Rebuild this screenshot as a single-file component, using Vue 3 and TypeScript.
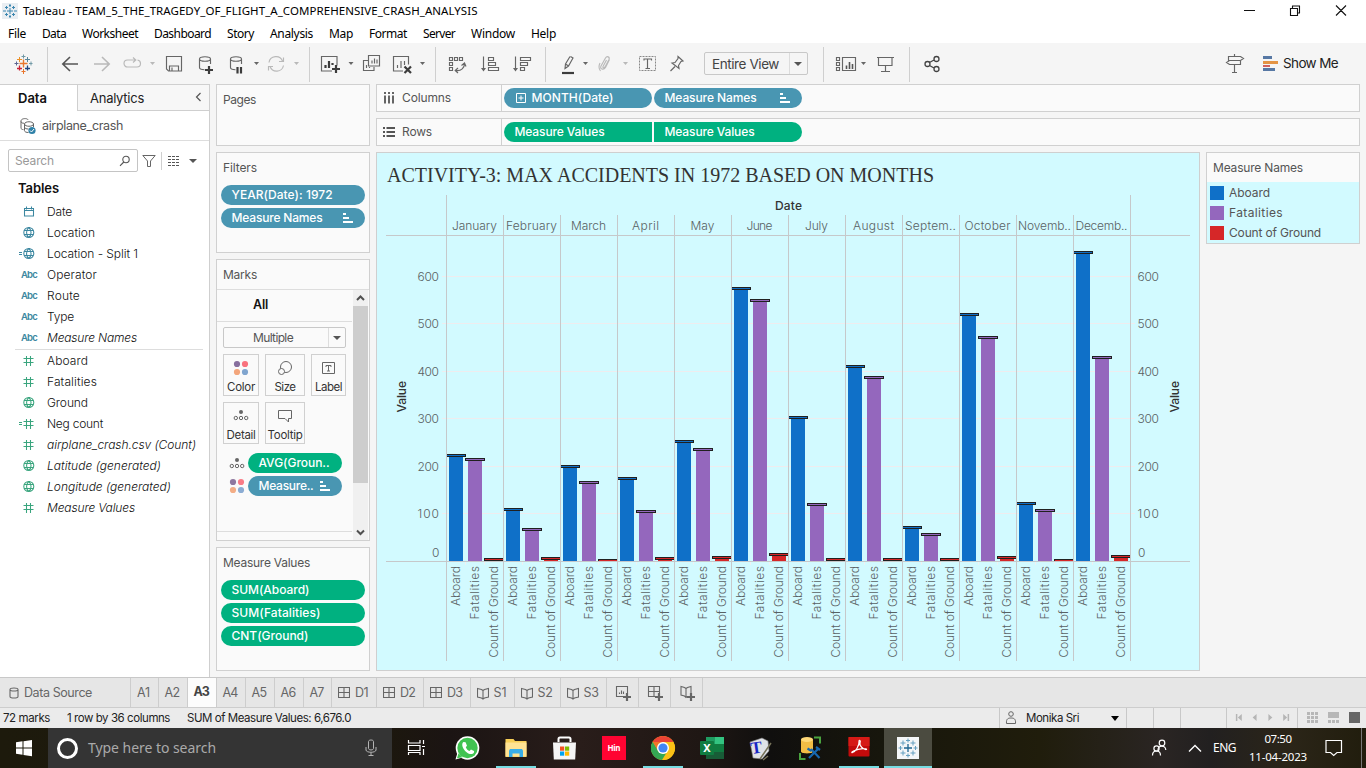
<script setup lang="ts">
interface Glyph {
  x: number
  w: number
  d?: string
  f?: string
  tone?: string
  bold?: string
}

// Tunes letter spacing so that a label takes the given width.
const vFit = {
  mounted(el: HTMLElement, binding: { value: number }) {
    const natural = el.getBoundingClientRect().width
    const count = (el.textContent ?? '').trim().length
    if (count > 0) el.style.letterSpacing = `${(binding.value - natural) / count}px`
  },
}

const menus: [string, number, number][] = [
  ['File', 18, 34], ['Data', 24, 40], ['Worksheet', 56, 72], ['Dashboard', 57, 73], ['Story', 27, 43],
  ['Analysis', 43, 59], ['Map', 24, 40], ['Format', 38, 54], ['Server', 32, 48], ['Window', 44, 60], ['Help', 25, 41],
]

const caret = (x: number) => `M${x - 2.5} 62h5l-2.5 3z`
const logo = 'M23.5 59.5v8M19.5 63.5h8'

const toolsLeft: Glyph[] = [
  { x: 47, w: 40, d: 'M78 64H63M70 57l-7.2 7 7.200 7', tone: 'strong' },
  { x: 87, w: 30, d: 'M94 64h15M102 57l7.200 7-7.200 7', tone: 'light strong' },
  { x: 117, w: 43, d: 'M133 67h-5.500a3.500 3.500 0 0 1-3.500-3.500 3.500 3.500 0 0 1 3.500-3.500h8M133 57.500l2.800 2.500-2.800 2.500M137.500 60a3.500 3.500 0 0 1 3 3.500c0 2-1.500 3.500-3.500 3.500h-4', f: caret(152.5), tone: 'light' },
  { x: 160, w: 30, d: 'M166.500 56.500h15v14.500h-13l-2-2zM169.500 71v-5h9v5M172 71v-3.500' },
  { x: 190, w: 32, d: 'M199.500 59c0-3 11-3 11 0s-11 3-11 0v8.500c0 1.500 2.500 2.200 5 2.300M210.500 59v5', bold: 'M209 66v8M205 70h8' },
  { x: 222, w: 42, d: 'M230.500 59c0-3 11-3 11 0s-11 3-11 0v8.500c0 1.500 2.500 2.200 5 2.300M241.500 59v5', f: caret(256.5), bold: 'M237.500 67v6.500M241 67v6.500' },
  { x: 264, w: 45, d: 'M269 62.500c1-7 11-8 13.500-1.500M283.500 65.500c-1.500 7-11 7.500-13.500 1M283.500 57.500v4h-4.500M268.500 70.500v-4h4.500', f: caret(296.5), tone: 'light' },
]
const toolsSheet: Glyph[] = [
  { x: 311, w: 47, d: 'M332 71h-10.500v-14.500h15.500v9', f: caret(351), bold: 'M336 65v8M332 69h8M325.500 68v-3M329 68v-7M332.500 65v-2' },
  { x: 358, w: 28, d: 'M368.500 55.500h11v10.500h-11zM368 60.500h-4.500v10h10.500v-3.500M366.500 68v-3M369.500 68v-1M372 63.500v-3M374.500 63.500v-5M377 63.500v-4' },
  { x: 386, w: 49, d: 'M403 71h-9.500v-14.500h15v8M397.500 68v-3M401 68v-7M404.500 65v-4', f: caret(422.5), bold: 'M404.500 66.500l6.500 6.500M411 66.500l-6.500 6.500' },
]
const toolsOrder: Glyph[] = [
  { x: 437, w: 37, d: 'M449.500 57.500h3v3h-3zM454.500 57.500h3v3h-3zM459.500 57.500h3v3h-3zM449.500 62.500h3v3h-3zM449.500 67.500h3v3h-3zM455.500 70.500c6 1 9-3 9-7M461.500 65.500l3-2.500 1.500 3.500M458 68l-2.800 2.500 2.800 2.500' },
  { x: 474, w: 32, d: 'M483.500 56.500v13M488.500 57.500h5v3h-5zM488.500 62.500h7v3h-7zM488.500 67.500h10v3h-10z', f: 'M481 68h5l-2.500 3.500z' },
  { x: 506, w: 39, d: 'M515.500 56.500v13M520.500 57.500h10v3h-10zM520.500 62.500h7v3h-7zM520.500 67.500h4v3h-4z', f: 'M513 68h5l-2.500 3.500z' },
]
const toolsMark: Glyph[] = [
  { x: 547, w: 45, d: 'M570.500 56.500l2.500 1.500-4.500 8-3.500 2.500.500-4.500 4.500-7.500M565.500 64l3 2', f: caret(585.5), bold: 'M562 73h12' },
  { x: 592, w: 41, d: 'M609.500 59.500l-4 8c-2 3-6 1.500-4.500-1.500l4.500-8c1.500-2.500 4.500-1 3.500 1.500l-4 7.500c-1.500 1.500-2.500.500-2-.500l3.500-6.500M600 63c-1.500 3-1 6 .500 8', f: caret(625.5), tone: 'light' },
  { x: 633, w: 29, d: 'M644 60.500v-1.500h7.500v1.500M647.500 59v9M645.500 68.500h4.500' },
  { x: 662, w: 34, d: 'M678 56.500l5 4.500-2 .500-2.500 4 .500 3-7-5.500 3-.500 3-4zM675 66.500l-4.500 4.500' },
]
const toolsView: Glyph[] = [
  { x: 825, w: 43, d: 'M842.500 57.500h13v13h-13zM836.500 57.500h3v3h-3zM836.500 62.500h3v3h-3zM836.500 67.500h3v3h-3z', f: caret(863.5), bold: 'M846.500 69v-3.500M849.500 69v-7M852.500 69v-5' },
  { x: 868, w: 41, d: 'M877 57.500h17M878.500 57.500v8h13.500v-8M885.500 66v5M881 71.500h9' },
]
const toolShare: Glyph = { x: 911, w: 40, d: 'M930 64a2.500 2.500 0 1 1-5 0a2.500 2.500 0 1 1 5 0M939 59a2.500 2.500 0 1 1-5 0a2.500 2.500 0 1 1 5 0M939 69a2.500 2.500 0 1 1-5 0a2.500 2.500 0 1 1 5 0M929.500 62.500l4.500-2.500M929.500 65.500l4.500 2.500' }

type FieldIcon = 'date' | 'globe' | 'abc' | 'num'
interface Field { name: string; w: number; icon: FieldIcon; calc?: boolean; it?: boolean }
const dimensions: Field[] = [
  { name: 'Date', w: 25, icon: 'date' },
  { name: 'Location', w: 48, icon: 'globe' },
  { name: 'Location - Split 1', w: 91, icon: 'globe', calc: true },
  { name: 'Operator', w: 50, icon: 'abc' },
  { name: 'Route', w: 33, icon: 'abc' },
  { name: 'Type', w: 27, icon: 'abc' },
  { name: 'Measure Names', w: 90, icon: 'abc', it: true },
]
const measures: Field[] = [
  { name: 'Aboard', w: 41, icon: 'num' },
  { name: 'Fatalities', w: 50, icon: 'num' },
  { name: 'Ground', w: 41, icon: 'globe' },
  { name: 'Neg count', w: 56, icon: 'num', calc: true },
  { name: 'airplane_crash.csv (Count)', w: 149, icon: 'num', it: true },
  { name: 'Latitude (generated)', w: 114, icon: 'globe', it: true },
  { name: 'Longitude (generated)', w: 124, icon: 'globe', it: true },
  { name: 'Measure Values', w: 88, icon: 'num', it: true },
]
const fieldGroups = [
  { kind: 'dim', rows: dimensions },
  { kind: 'mea', rows: measures },
]

// Per month: label, label width, and the top of each bar's cap (aboard, fatalities, ground).
const months: [string, number, number, number, number][] = [
  ['January', 45, 454, 458, 558], ['February', 51, 508, 528, 557], ['March', 35, 465, 481, 559],
  ['April', 27, 477, 510, 557], ['May', 24, 440, 448, 556], ['June', 26, 287, 299, 553],
  ['July', 23, 416, 503, 558], ['August', 41, 365, 376, 558], ['Septem..', 51, 526, 533, 558],
  ['October', 46, 313, 336, 556], ['Novemb..', 53, 502, 509, 559], ['Decemb..', 52, 251, 356, 555],
]
const series = [
  { name: 'Aboard', color: '#0f70c8', bar: 3, cap: 1, capW: 19, base: 14, len: 40, lw: 41 },
  { name: 'Fatalities', color: '#9467bd', bar: 22, cap: 19, capW: 20, base: 33, len: 53.5, lw: 54 },
  { name: 'Count of Ground', color: '#d62728', bar: 41, cap: 38, capW: 19, base: 52, len: 91.5, lw: 92 },
]
const colX = (i: number) => 446 + i * 57
const ticks: [string, number][] = [
  ['600', 276], ['500', 323], ['400', 371], ['300', 418], ['200', 466], ['100', 513],
]

interface SheetTab { t: string; w: number; tw: number; kind?: 'dash' | 'story' }
const sheets: SheetTab[] = [
  { t: 'A1', w: 28, tw: 13 }, { t: 'A2', w: 29, tw: 15 }, { t: 'A3', w: 29, tw: 15 }, { t: 'A4', w: 29, tw: 15 },
  { t: 'A5', w: 29, tw: 15 }, { t: 'A6', w: 29, tw: 15 }, { t: 'A7', w: 28, tw: 14 },
  { t: 'D1', w: 45, tw: 13, kind: 'dash' }, { t: 'D2', w: 47, tw: 15, kind: 'dash' }, { t: 'D3', w: 47, tw: 15, kind: 'dash' },
  { t: 'S1', w: 44, tw: 13, kind: 'story' }, { t: 'S2', w: 46, tw: 15, kind: 'story' }, { t: 'S3', w: 46, tw: 15, kind: 'story' },
]
const active = 'A3'
const book = 'M.500 2.500l4 1 1.500 1 1.500-1 4-1v8.500l-4 1-1.500 1-1.500-1-4-1zM6 4.500v8'
const cards = [['Color', 36, 28], ['Size', 40, 21], ['Label', 35, 27], ['Detail', 36, 29], ['Tooltip', 40, 35]] as const
</script>

<template>
  <div class="app">
    <header class="title">
      <svg class="app-icon" viewBox="0 0 16 16"><rect width="16" height="16" fill="#e9eef2" /><path d="M8 5v6M5 8h6M8 1v3M8 12v3M1 8h3M12 8h3M4.500 3v3M3 4.500h3M11.500 3v3M10 4.500h3M4.500 10v3M3 11.500h3M11.500 10v3M10 11.500h3M7 2.500h2M7 13.500h2" stroke="#3c87b0" fill="none" /></svg>
      <span v-fit="454.500">Tableau - TEAM_5_THE_TRAGEDY_OF_FLIGHT_A_COMPREHENSIVE_CRASH_ANALYSIS</span>
      <svg class="win" viewBox="1240 0 120 22"><path d="M1244 10.500h11M1290.500 8.500h7v7h-7zM1292.500 8v-2h7v7h-2M1336 5.500l10 10M1346 5.500l-10 10" stroke="#111" fill="none" stroke-width="1.100" /></svg>
    </header>
    <nav class="menu">
      <span v-for="m in menus" :key="m[0]" class="menu-item" :style="{ width: m[2] + 'px' }"><span v-fit="m[1]">{{ m[0] }}</span></span>
    </nav>

    <div class="toolbar">
      <svg class="tool logo-tool" viewBox="0 43 47 41">
        <path :d="logo" stroke="#e8762d" stroke-width="1.400" />
        <path d="M19.500 57v5M17 59.500h5" stroke="#eb9129" /><path d="M27.500 57v5M25 59.500h5" stroke="#59879b" />
        <path d="M19.500 65.500v5M17 68.500h5" stroke="#c72035" stroke-width="1.300" /><path d="M27.500 65.500v5M25 68.500h5" stroke="#1f447e" stroke-width="1.300" />
        <path d="M23.500 54.500v4M21.500 56.500h4M31 61.500v4M29 63.500h3.500" stroke="#7199a6" /><path d="M16.500 61.500v4M14.500 63.500h4" stroke="#5b6591" /><path d="M23.500 69v5M21.500 71.500h4" stroke="#e8762d" />
      </svg>
      <template v-for="(group, gi) in [toolsLeft, toolsSheet, toolsOrder, toolsMark]" :key="gi">
        <i v-if="gi" class="sep" /><i v-else class="sep first" />
        <svg v-for="g in group" :key="g.x" class="tool" :class="g.tone" :viewBox="`${g.x} 43 ${g.w} 41`" :style="{ width: g.w + 'px' }">
          <path v-if="g.x === 633" d="M639.500 56.500h16v14h-16z" class="dash" />
          <path v-if="g.d" :d="g.d" class="line" /><path v-if="g.bold" :d="g.bold" class="heavy" /><path v-if="g.f" :d="g.f" class="fill" />
        </svg>
      </template>
      <div class="view-select"><span v-fit="67">Entire View</span><i class="drop" /></div>
      <i class="sep" />
      <svg v-for="g in toolsView" :key="g.x" class="tool" :viewBox="`${g.x} 43 ${g.w} 41`" :style="{ width: g.w + 'px' }">
        <path :d="g.d" class="line" /><path v-if="g.bold" :d="g.bold" class="heavy thin" /><path v-if="g.f" :d="g.f" class="fill" />
      </svg>
      <i class="sep" />
      <svg class="tool share" viewBox="911 43 40 41"><path :d="toolShare.d" class="line" /></svg>
      <svg class="tool guide" viewBox="1220 43 30 41"><path d="M1234.500 54v2M1234.500 64.500v8M1228.500 56.500h12l3 2-3 2h-12zM1240.500 60.500h-11l-3 2 3 2h11zM1232 72.500h5" class="line" /></svg>
      <svg class="tool show-icon" viewBox="1262 43 16 41"><path d="M1263 57.500h9" stroke="#5778a4" stroke-width="3" /><path d="M1263 62.500h15" stroke="#e49444" stroke-width="3" /><path d="M1263 66h7" stroke="#d1615d" stroke-width="2" /><path d="M1263 69.500h12" stroke="#5778a4" stroke-width="3" /></svg>
      <span class="show-me"><span v-fit="55">Show Me</span></span>
    </div>

    <main class="work">
      <aside class="data-pane">
        <div class="pane-tabs"><div class="tab on"><span v-fit="29">Data</span></div><div class="tab"><span v-fit="54">Analytics</span><svg viewBox="0 0 7 10"><path d="M5.500 1l-4 4 4 4" stroke="#555" fill="none" stroke-width="1.200" /></svg></div></div>
        <div class="source">
          <svg viewBox="0 0 18 18"><path d="M2 4c0-3 7-3 7-1M2 4v7c0 1 1 1.500 2.500 1.700M2 4.500c0 1.500 2 1.800 3 1.700M5.500 7c0-3 9-3 9 0s-9 3-9 0v6.500c0 1.500 2 2 4 2M14.500 7v3M5.500 10c0 1.500 2 2 4 2" stroke="#666" fill="none" /><circle cx="13" cy="13.500" r="3.600" fill="#2f81a8" /><path d="M11 13.500l1.500 1.500 2.500-3" stroke="#fff" fill="none" /></svg>
          <span v-fit="81">airplane_crash</span>
        </div>
        <div class="search-row">
          <div class="search"><span v-fit="39">Search</span><svg viewBox="0 0 12 12"><circle cx="7" cy="4.500" r="3.200" /><path d="M4.800 7L1 10.800" /></svg></div>
          <svg class="funnel" viewBox="0 0 14 14"><path d="M.8 1.500h12.400L8.500 7v5.500h-3V7z" /></svg>
          <i class="bar" />
          <svg class="rows" viewBox="0 0 12 10"><path d="M0 .5h12M0 3.500h12M0 6.500h12M0 9.500h12" stroke-dasharray="3 1" /></svg>
          <i class="drop" />
        </div>
        <h3><span v-fit="41">Tables</span></h3>
        <ul v-for="grp in fieldGroups" :key="grp.kind" class="fields" :class="grp.kind">
          <li v-for="f in grp.rows" :key="f.name">
            <span v-if="f.icon === 'abc'" class="abc"><span v-fit="16">Abc</span></span>
            <svg v-else class="ficon" viewBox="0 0 17 13">
              <path v-if="f.calc" d="M0 5.500h3M0 7.500h3" />
              <path v-if="f.icon === 'date'" d="M5.500 3.500h9v7.500h-9zM5.500 5.500h9M7.500 1.500v3M12.500 1.500v3" />
              <path v-else-if="f.icon === 'globe'" d="M14.800 6.500a5 5 0 1 1-10 0a5 5 0 1 1 10 0M9.800 1.500c-3 2.500-3 7.500 0 10M9.800 1.500c3 2.500 3 7.500 0 10M5.500 4.500h8.500M5.500 8.500h8.500" />
              <path v-else d="M7.500 2v10M11.500 2v10M4.500 4.500h10M4.500 8.500h10" />
            </svg>
            <span class="fname" :class="{ it: f.it }"><span v-fit="f.w">{{ f.name }}</span></span>
          </li>
        </ul>
      </aside>

      <section class="cards">
        <div class="card pages"><h4><span v-fit="33">Pages</span></h4></div>
        <div class="card filters"><h4><span v-fit="34">Filters</span></h4>
          <div class="pill blue"><span v-fit="101">YEAR(Date): 1972</span></div>
          <div class="pill blue"><span v-fit="91">Measure Names</span><svg class="sort" viewBox="0 0 10 10"><path d="M0 1h3M0 5h6M0 9h10" /></svg></div>
        </div>
        <div class="card marks"><h4><span v-fit="34">Marks</span></h4>
          <div class="marks-body">
            <div class="marks-main">
              <div class="all"><span v-fit="15">All</span></div>
              <div class="multi"><span class="mlabel"><span v-fit="40">Multiple</span></span><span class="mdrop"><i class="drop" /></span></div>
              <div class="mark-cards">
                <div v-for="(c, ci) in cards" :key="c[0]" class="mc" :style="{ width: c[1] + 'px' }">
                  <svg viewBox="0 0 16 16">
                    <g v-if="ci === 0"><circle cx="4" cy="4" r="3.100" fill="#876f9e" /><circle cx="12" cy="4" r="3.100" fill="#f9727e" /><circle cx="4" cy="12" r="3.100" fill="#f3a67c" /><circle cx="12" cy="12" r="3.100" fill="#80a5cf" /></g>
                    <g v-else-if="ci === 1" class="ol"><circle cx="9" cy="7" r="5.500" /><circle cx="4.500" cy="11.500" r="3" fill="#fafafa" /></g>
                    <g v-else-if="ci === 2" class="ol"><path d="M1.500 2.500h12v11h-12zM5 7V5.500h5V7M7.500 5.500V11M6 11h3" /></g>
                    <g v-else-if="ci === 3" class="ol"><circle cx="8" cy="4" r="2" fill="#666" stroke="none" /><circle cx="2.800" cy="10" r="1.700" /><circle cx="8" cy="10" r="1.700" /><circle cx="13.200" cy="10" r="1.700" /></g>
                    <g v-else class="ol"><path d="M1.500 2.500h13v8h-3v3.500l-3.500-3.500h-6.500z" /></g>
                  </svg>
                  <span v-fit="c[2]">{{ c[0] }}</span>
                </div>
              </div>
              <div class="enc"><svg viewBox="0 0 16 16" class="ol"><circle cx="8" cy="5" r="2" fill="#666" stroke="none" /><circle cx="2.800" cy="11" r="1.700" /><circle cx="8" cy="11" r="1.700" /><circle cx="13.200" cy="11" r="1.700" /></svg><div class="pill green"><span v-fit="71">AVG(Groun..</span></div></div>
              <div class="enc"><svg viewBox="0 0 16 16"><circle cx="4" cy="4" r="3.100" fill="#8f789f" /><circle cx="12" cy="4" r="3.100" fill="#f97c87" /><circle cx="4" cy="12" r="3.100" fill="#f3ad86" /><circle cx="12" cy="12" r="3.100" fill="#8bacd3" /></svg><div class="pill blue"><span v-fit="55">Measure..</span><svg class="sort" viewBox="0 0 10 10"><path d="M0 1h3M0 5h6M0 9h10" /></svg></div></div>
            </div>
            <div class="scroll"><svg viewBox="0 0 15 16"><path d="M4 10l3.500-3.500L11 10" /></svg><i /><svg class="down" viewBox="0 0 15 16"><path d="M4 6.500l3.500 3.500L11 6.500" /></svg></div>
          </div>
        </div>
        <div class="card values"><h4><span v-fit="87">Measure Values</span></h4>
          <div class="pill green"><span v-fit="78">SUM(Aboard)</span></div>
          <div class="pill green"><span v-fit="89">SUM(Fatalities)</span></div>
          <div class="pill green"><span v-fit="77">CNT(Ground)</span></div>
        </div>
      </section>

      <section class="stage">
        <div class="shelf"><div class="shelf-name"><svg viewBox="0 0 12 12"><path d="M2 0v2M6 0v2M10 0v2M2 3.500v8M6 3.500v8M10 3.500v8" /></svg><span v-fit="49">Columns</span></div>
          <div class="pill blue"><svg class="plus" viewBox="0 0 10 10"><path d="M.5.5h9v9h-9zM2.500 5h5M5 2.500v5" /></svg><span v-fit="82">MONTH(Date)</span></div>
          <div class="pill blue"><span v-fit="92">Measure Names</span><svg class="sort" viewBox="0 0 10 10"><path d="M0 1h3M0 5h6M0 9h10" /></svg></div>
        </div>
        <div class="shelf"><div class="shelf-name"><svg viewBox="0 0 12 12"><path d="M0 2h2M0 6h2M0 10h2M3.500 2h8.500M3.500 6h8.500M3.500 10h8.500" /></svg><span v-fit="30">Rows</span></div>
          <div class="pill green lhalf"><span v-fit="90">Measure Values</span></div>
          <div class="pill green rhalf"><span v-fit="90">Measure Values</span></div>
        </div>
        <div class="viz-row">
          <svg class="viz" viewBox="376 152 824 519" shape-rendering="crispEdges">
            <rect x="376.500" y="152.500" width="823" height="518" fill="#d2faff" stroke="#cfcfcf" />
            <text x="387" y="181.500" class="vt" textLength="547">ACTIVITY-3: MAX ACCIDENTS IN 1972 BASED ON MONTHS</text>
            <text x="775" y="210" class="dk" textLength="27">Date</text>
            <g v-for="t in ticks" :key="t[0]">
              <path :d="`M442 ${t[1] + .5}H1135`" stroke="#efecee" />
              <text x="417.500" :y="t[1] + 5" class="ax" textLength="21.500">{{ t[0] }}</text>
              <text x="1137.500" :y="t[1] + 5" class="ax" textLength="21.500">{{ t[0] }}</text>
            </g>
            <text x="432" y="557" class="ax">0</text><text x="1138" y="557" class="ax">0</text>
            <g v-for="(m, i) in months" :key="m[0]">
              <text :x="colX(i) + 28.500 - m[1] / 2" y="230" class="ax" :textLength="m[1]">{{ m[0] }}</text>
              <path :d="`M${colX(i) + 19.5} 562v3M${colX(i) + 38.5} 562v3`" stroke="#eef2f2" />
              <g v-for="(s, k) in series" :key="s.name">
                <rect :x="colX(i) + s.bar" :y="(m[k + 2] as number) + 1" width="14" :height="560 - (m[k + 2] as number)" :fill="s.color" />
                <rect :x="colX(i) + s.cap" :y="m[k + 2]" :width="s.capW" :height="m[k + 2] === 559 ? 2 : 3" fill="#202020" />
                <rect :x="colX(i) + s.cap + (k ? 1 : 0)" :y="(m[k + 2] as number) + 1" :width="s.capW - (k === 1 ? 2 : 1)" height="1" :fill="s.color" />
                <text :transform="`translate(${colX(i) + s.base} ${566 + s.len}) rotate(-90)`" class="ax" :textLength="s.len">{{ s.name }}</text>
              </g>
            </g>
            <path v-for="n in 13" :key="n" :d="`M${colX(n - 1) + .5} ${n === 1 || n === 13 ? 195 : 215}V661`" stroke="#c6c8ca" />
            <path d="M386 235.500H1190M386 561.500H1190" stroke="#c6c8ca" />
            <text transform="translate(406 412.500) rotate(-90)" class="dk" textLength="31.500">Value</text>
            <text transform="translate(1179 412.500) rotate(-90)" class="dk" textLength="31.500">Value</text>
          </svg>
          <div class="legend"><h4><span v-fit="90">Measure Names</span></h4>
            <div v-for="s in series" :key="s.name" class="lrow"><i :style="{ background: s.color }" /><span v-fit="s.lw">{{ s.name }}</span></div>
          </div>
        </div>
      </section>
    </main>

    <footer class="sheets">
      <div class="ds"><svg viewBox="0 0 10 12"><path d="M1 2.500c0-2 8-2 8 0s-8 2-8 0v7c0 2 8 2 8 0v-7" /></svg><span v-fit="68">Data Source</span></div>
      <div v-for="s in sheets" :key="s.t" class="sheet" :class="{ on: s.t === active }" :style="{ width: s.w + 'px' }">
        <svg v-if="s.kind === 'dash'" viewBox="0 0 12 14"><path d="M.5 1.500h11v10h-11zM6 1.500v10M.5 6.500h11" /></svg>
        <svg v-else-if="s.kind === 'story'" viewBox="0 0 12 14"><path :d="book" /></svg>
        <span v-fit="s.tw">{{ s.t }}</span>
      </div>
      <div class="new"><svg viewBox="0 0 16 16"><path d="M9 11.500H1.500v-10h11V8M4.500 9V7.500M6.500 9V5.500M8.500 9V6.500" /><path class="h" d="M12 8v8M8 12h8" /></svg></div>
      <div class="new"><svg viewBox="0 0 16 16"><path d="M9 11.500H1.500v-10h11V8M7 1.500v10M1.500 6.500h11" /><path class="h" d="M12 8v8M8 12h8" /></svg></div>
      <div class="new"><svg viewBox="0 0 16 16"><path d="M8 11.500l-1 1-1.500-1.500-3.500-1v-8.500l3.500 1L7 3.500l1.500-1 3.500-1V8M7 3.500v9" /><path class="h" d="M12 8v8M8 12h8" /></svg></div>
    </footer>

    <div class="status">
      <span class="s1"><span v-fit="47">72 marks</span></span><span class="s2"><span v-fit="103">1 row by 36 columns</span></span><span><span v-fit="164">SUM of Measure Values: 6,676.0</span></span>
      <div class="user"><svg viewBox="0 0 12 14"><circle cx="6" cy="3" r="2.300" /><path d="M1.500 12.500c-.5-5 2-5.500 4.500-5.500s5 .5 4.500 5.500z" /></svg><span v-fit="53">Monika Sri</span><i class="drop blk" /></div>
      <i class="cell" /><i class="cell" /><i class="cell c3" />
      <svg class="nav" viewBox="1227 708 71 20"><path d="M1236 714h1.500v7h-1.500zM1242 714v7l-4-3.500zM1257 714v7l-4-3.500zM1269 714v7l4-3.500zM1284 714v7l4-3.500zM1288.500 714h1.500v7h-1.500z" fill="#b5b5b5" /></svg>
      <svg class="modes" viewBox="1298 708 68 20"><path d="M1307 712h3v3h-3zM1311 712h3v3h-3zM1315 712h3v3h-3zM1307 716h3v3h-3zM1311 716h3v3h-3zM1315 716h3v3h-3zM1307 720h3v3h-3zM1311 720h3v3h-3zM1315 720h3v3h-3zM1328 712h11v6h-11zM1328 720h3v3h-3zM1332 720h3v3h-3zM1336 720h3v3h-3z" fill="#b7b7b7" /><path d="M1349 712h11v11h-11z" fill="#666" /></svg>
    </div>

    <div class="taskbar">
      <svg class="start" viewBox="0 0 48 40"><path d="M16 14.300l6.500-1v6.200H16zM23.500 13.200l8.500-1.300v7.600h-8.500zM16 20.500h6.500v6.300l-6.500-1zM23.500 20.500H32v7.800l-8.500-1.300z" fill="#fff" /></svg>
      <div class="tsearch"><i class="cortana" /><span v-fit="128">Type here to search</span>
        <svg viewBox="0 0 12 18"><path d="M3.500 2.500c0-2 5-2 5 0v7c0 2-5 2-5 0zM1 8v3c0 3 10 3 10 0V8M6 13.500v3M3.500 16.500h5" /></svg></div>
      <svg class="tv" viewBox="392 728 50 40"><path d="M408.500 740v3h11.500V740M408.500 755v-2.500h11.500v2.500M408.500 745.500h11.500v5h-11.500zM423.500 740v4M423.500 749v6M422 746.500h3" stroke="#fff" fill="none" stroke-width="1.200" /></svg>
      <svg class="apps" viewBox="442 728 490 40">
        <rect x="884" y="728" width="48" height="40" fill="#4b4b40" />
        <path d="M496 766h40v2h-40zM643 766h40v2h-40zM839 766h40v2h-40zM884 766h48v2h-48z" fill="#76dce2" />
        <circle cx="467.500" cy="748" r="11.800" fill="#fff" /><path d="M455.500 759.500l2-7 5 5z" fill="#fff" /><circle cx="467.500" cy="748" r="10.200" fill="#40c351" /><path d="M457 758.200l1.500-5 4 4z" fill="#40c351" />
        <path d="M463.500 742c-4 3 2.500 13 8.500 12 2-.5 2.300-2 2-3l-3-1.500-1.500 1.500c-1.500-.5-3-2-3.700-3.800l1.200-1.400-1.400-3.500z" fill="#fff" />
        <path d="M505.500 739h8l1.500 2h11.500v16h-21z" fill="#f8cf57" /><path d="M505.500 742.500h21v14h-21z" fill="#ffe394" /><path d="M509 757v-5.500c0-2 1-2.500 2-2.500h10c1 0 2 .5 2 2.500v5.500h-3.500v-3.500h-7v3.500z" fill="#38aee8" />
        <path d="M558.500 742v-3c0-1 .5-1.500 1.500-1.500h9c1 0 1.500.5 1.500 1.500v3" fill="none" stroke="#fff" stroke-width="2" /><path d="M553 742.500h23l-.8 17h-21.400z" fill="#f5f5f5" /><path d="M560 746.500h4.200v4.200H560z" fill="#f25022" /><path d="M565 746.500h4.200v4.200H565z" fill="#7fba00" /><path d="M560 751.500h4.200v4.200H560z" fill="#00a4ef" /><path d="M565 751.500h4.200v4.200H565z" fill="#ffb900" />
        <rect x="602" y="736" width="24" height="24" fill="#ff0432" /><text x="607.500" y="751.200" class="hin" textLength="13">Hin</text>
        <circle cx="663" cy="748" r="12" fill="#fbc116" /><path d="M652.600 742A12 12 0 0 1 673.400 742L663 742z" fill="#ea4335" /><path d="M652.600 742L658 751l5 3-4.500 5.200A12 12 0 0 1 652.600 742z" fill="#34a853" /><path d="M652.600 742h10.400l-5 9z" fill="#ea4335" opacity=".6" /><path d="M673.400 742H663l5.200 9-6.200 9A12 12 0 0 0 673.400 742z" fill="#fbc116" /><path d="M652.600 742l5.200 9a6 6 0 0 0 8.500 2l-4.300 7a12 12 0 0 1-9.400-18z" fill="#34a853" /><circle cx="663" cy="748" r="6" fill="#fff" /><circle cx="663" cy="748" r="4.600" fill="#4285f4" />
        <path d="M706 737h18v22h-18z" fill="#21a366" /><path d="M706 737h9v7h-9z" fill="#1f9c61" /><path d="M715 737h9v7h-9z" fill="#33c481" /><path d="M706 744h18v8h-18z" fill="#107c41" /><path d="M706 752h18v7h-18z" fill="#185c37" /><rect x="700" y="741" width="14" height="14" rx="1" fill="#107c41" /><text x="703.300" y="752.200" class="xl">X</text>
        <path d="M750 742l12-4 6 3 1 10-7 8-9-1z" fill="#dfe2e6" stroke="#777" stroke-width=".6" /><path d="M760 759l11-16M763 760l5-4" stroke="#77735a" fill="none" stroke-width="1.500" /><text transform="translate(751.500 754) rotate(-8)" class="tt">T</text>
        <path d="M801 739.500v12c0 2.500 12 2.500 12 0v-12" fill="#f2bd45" /><ellipse cx="807" cy="739.500" rx="6" ry="2.500" fill="#ffd978" /><path d="M814 737.500h6v6M800 753v6h5.500" fill="none" stroke="#4aa33f" stroke-width="2" /><path d="M809 758l9-9M811 749l8.500 9M807.500 748.500l4 2.500M816 747l4 3" stroke="#1768b0" stroke-width="2.200" fill="none" />
        <rect x="848.500" y="737" width="21" height="19.500" rx="1" fill="#c20b0b" /><path d="M848.500 737h21v9h-21z" fill="#d61a16" /><path d="M852.500 752.500c3-.5 7-7 6.500-11 0-2 2-1 1 1.500-1 3 4 7 6.500 6.500 1-1-6-2-13 1.500-2 1-2 2-1 1.500z" fill="none" stroke="#fff" stroke-width="1.200" />
        <rect x="897" y="737" width="22" height="22" fill="#f4f6f8" /><path d="M908 744v8M904 748h8" stroke="#1f6590" stroke-width="1.300" /><path d="M908 738.500v4M906 740.500h4M908 753.500v4M906 755.500h4M898.500 748h4M900.500 746v4M913.500 748h4M915.500 746v4M903 740.500v5M900.500 743h5M913 740.500v5M910.500 743h5M903 750.500v5M900.500 753h5M913 750.500v5M910.500 753h5" stroke="#659fc0" />
      </svg>
      <svg class="tray" viewBox="1145 728 62 40"><g stroke="#fff" fill="none" stroke-width="1.200"><circle cx="1162" cy="743" r="2.800" /><path d="M1158 750c0-5 7.500-5 7.800 0" /><circle cx="1156.500" cy="748.500" r="2.600" /><path d="M1152.500 755.500c0-6 8-6 8 0" /><path d="M1189 751.500l6-6 6 6" stroke-width="1.400" /></g></svg>
      <span class="eng"><span v-fit="23">ENG</span></span>
      <div class="clock"><span v-fit="27">07:50</span><span v-fit="58">11-04-2023</span></div>
      <svg class="note" viewBox="0 0 18 18"><path d="M1 1.500h15.500v12h-4.500l-3.300 3-3.200-3H1z" /></svg>
      <i class="peek" />
    </div>
  </div>
</template>

<style>
html, body { margin: 0; overflow: hidden; }
</style>

<style scoped>
* { box-sizing: border-box; }
.app { width: 1366px; height: 768px; display: flex; flex-direction: column; background: #f5f5f5; font: 12px/16px Inter, "Liberation Sans", sans-serif; color: #333; white-space: nowrap; overflow: hidden; }
span { display: inline-block; }
svg { display: block; flex: none; }
i { flex: none; display: block; }
h3, h4 { margin: 0; font-weight: 400; }
.title, .menu, .taskbar { font-family: "Noto Sans", "Open Sans", sans-serif; color: #000; }
.title { height: 22px; background: #fff; display: flex; align-items: center; padding-left: 2px; flex: none; font-size: 11.5px; }
.app-icon { width: 16px; height: 16px; margin-right: 5px; }
.win { width: 120px; height: 22px; margin-left: auto; margin-right: 6px; }
.menu { height: 21px; background: #fff; display: flex; padding: 4px 0 0 8px; flex: none; font-size: 12px; }
.menu-item { flex: none; }
.toolbar { height: 41px; flex: none; display: flex; align-items: flex-start; }
.tool { height: 41px; }
.logo-tool { width: 47px; }
.sep { width: 1px; height: 35px; background: #cfcfcf; margin: 4px 1px 0 0; }
.sep.first { margin-right: -1px; }
.tool .line { fill: none; stroke: #666; stroke-width: 1.150; }
.strong .line { stroke: #555; stroke-width: 1.600; }
.share .line { stroke: #444; stroke-width: 1.300; }
.tool .heavy { fill: none; stroke: #3c3c3c; stroke-width: 2.200; }
.tool .heavy.thin { stroke-width: 1.600; stroke: #555; }
.tool .fill { fill: #666; }
.dash { fill: none; stroke: #888; stroke-dasharray: 2 1; }
.light .line { stroke: #b9b9b9; }
.light .fill { fill: #b9b9b9; }
.view-select { width: 104px; height: 23px; border: 1px solid #c8c8c8; border-radius: 2px; margin: 9px 15px 0 8px; display: flex; align-items: center; justify-content: space-between; padding: 0 5px 0 7px; font-size: 13.5px; color: #444; background: linear-gradient(to right, transparent 84px, #dcdcdc 84px, #dcdcdc 85px, transparent 85px); }
.drop { width: 0; height: 0; border: 4px solid transparent; border-top: 4px solid #555; border-bottom: 0; }
.share { width: 40px; }
.guide { width: 30px; margin-left: auto; margin-right: 12px; }
.show-icon { width: 16px; margin-right: 5px; }
.show-me { width: 83px; font-size: 13.5px; color: #222; padding-top: 12px; }
.work { height: 593px; flex: none; display: flex; }
.data-pane { width: 210px; background: #fff; border-right: 1px solid #cfcfcf; flex: none; border-top: 1px solid #cfcfcf; }
.pane-tabs { display: flex; height: 26px; }
.tab { flex: 1; background: #f7f7f7; border-left: 1px solid #cfcfcf; border-bottom: 1px solid #cfcfcf; display: flex; align-items: center; justify-content: space-between; padding: 0 7px 0 12px; font-size: 13px; color: #222; }
.tab svg { width: 7px; height: 10px; margin-top: -2px; }
.tab.on { flex: none; width: 77px; background: #fff; border: 0; font-weight: 600; color: #111; padding-left: 18px; }
.source { height: 30px; border-bottom: 1px solid #ddd; display: flex; align-items: center; padding-left: 19px; color: #555; font-size: 12.5px; }
.source svg { width: 18px; height: 18px; margin-right: 5px; }
.search-row { display: flex; align-items: center; padding: 8px 0 0 8px; }
.search { width: 130px; height: 23px; border: 1px solid #c4c4c4; border-radius: 2px; display: flex; align-items: center; justify-content: space-between; padding: 0 6px; color: #999; }
.search svg { width: 12px; height: 12px; fill: none; stroke: #555; stroke-width: 1.100; }
.funnel { width: 14px; height: 14px; margin: 0 5px 0 4px; fill: none; stroke: #666; }
.bar { width: 1px; height: 18px; background: #cfcfcf; }
.rows { width: 12px; height: 10px; margin: 0 9px 0 6px; stroke: #555; }
h3 { padding: 8px 0 0 18px; font-weight: 600; font-size: 13px; line-height: 16px; color: #111; height: 29px; }
.fields { list-style: none; margin: 0; padding: 0; stroke: #3c87a0; color: #3c87a0; }
.fields.mea { stroke: #3aa57e; color: #3aa57e; border-top: 1px solid #ddd; margin: 1px 6px 0 15px; }
.fields.mea li { padding-left: 4px; }
.fields li { height: 21px; display: flex; align-items: center; padding-left: 19px; }
.ficon { width: 17px; height: 13px; margin-right: 11px; fill: none; stroke-width: 1.050; }
.abc { width: 28px; padding-left: 2px; font-size: 9.500px; font-weight: 600; stroke: none; }
.fname { color: #111; font-weight: 300; stroke: none; }
.it { font-style: italic; }
.cards { width: 154px; margin-left: 6px; flex: none; display: flex; flex-direction: column; gap: 6px; }
.card { border: 1px solid #d0d0d0; background: #fafafa; flex: none; color: #555; }
.card h4 { padding: 7px 0 0 6px; height: 32px; }
.pages { height: 62px; }
.filters { height: 101px; }
.marks { height: 282px; }
.card.marks h4 { height: 30px; border-bottom: 1px solid #ddd; }
.values { height: 124px; }
.pill { height: 20px; border-radius: 10px; color: #fff; display: flex; align-items: center; padding: 0 17px 0 10.500px; font-weight: 500; margin: 0 4px 3px; }
.blue { background: #4996b2; }
.green { background: #00b180; }
.sort { width: 10px; height: 10px; stroke: #fff; stroke-width: 2; margin-left: auto; margin-right: -5px; }
.marks-body { display: flex; height: 250px; }
.marks-main { width: 135px; flex: none; border-bottom: 1px solid #ddd; height: 242px; }
.all { height: 32px; border-bottom: 1px solid #ddd; padding: 7px 0 0 36px; font-weight: 600; font-size: 12.500px; color: #111; }
.multi { height: 21px; width: 123px; margin: 5px 0 6px 6px; border: 1px solid #c8c8c8; border-radius: 2px; display: flex; }
.mlabel { width: 104px; text-align: center; padding-top: 2px; padding-right: 6px; color: #555; }
.mdrop { border-left: 1px solid #ddd; flex: 1; padding: 8px 0 0 4px; }
.mark-cards { display: flex; flex-wrap: wrap; gap: 6px; padding-left: 6px; width: 131px; margin-bottom: 9px; }
.mc { height: 42px; border: 1px solid #d0d0d0; display: flex; flex-direction: column; align-items: center; justify-content: space-between; padding: 5px 0 0; color: #333; font-size: 11.500px; }
.mc svg, .enc > svg { width: 16px; height: 16px; }
.ol { fill: none; stroke: #666; stroke-width: 1; }
.enc { display: flex; padding-left: 12px; height: 23px; }
.enc > svg { margin: 2px 3px 0 0; }
.enc .pill { width: 94px; margin: 0; padding-right: 17px; }
.scroll { width: 15px; margin-left: 1px; background: #f0f0f0; display: flex; flex-direction: column; }
.scroll i { height: 177px; background: #cdcdcd; }
.scroll svg { width: 15px; height: 16px; fill: none; stroke: #505050; stroke-width: 2; }
.scroll .down { margin-top: auto; }
.stage { width: 984px; margin-left: 6px; flex: none; display: flex; flex-direction: column; }
.shelf { height: 28px; border: 1px solid #d0d0d0; background: #fafafa; display: flex; align-items: center; margin-bottom: 6px; flex: none; color: #555; }
.shelf-name { width: 125px; height: 26px; border-right: 1px solid #d0d0d0; display: flex; align-items: center; padding-left: 6px; gap: 7px; margin-right: 2px; }
.shelf-name svg { width: 12px; height: 12px; stroke: #555; stroke-width: 1.800; }
.shelf .pill { width: 148px; margin: 0 2px 0 0; flex: none; }
.plus { width: 10px; height: 10px; fill: none; stroke: #fff; margin: 0 6px 0 1px; }
.lhalf { border-radius: 10px 0 0 10px; }
.rhalf { border-radius: 0 10px 10px 0; }
.viz-row { display: flex; align-items: flex-start; gap: 6px; }
.viz { width: 824px; height: 519px; }
.viz text { font-size: 12px; }
.viz .ax { fill: #596163; font-weight: 300; }
.viz .dk { fill: #333; font-weight: 500; }
.viz .vt { font: 20px "Liberation Serif", serif; fill: #333; }
.legend { width: 154px; height: 92px; border: 1px solid #d0d0d0; background: linear-gradient(#fafafa 29px, #d2faff 29px); color: #555; }
.legend h4 { height: 30px; padding: 7px 0 0 6px; }
.lrow { height: 20px; display: flex; align-items: center; padding-left: 3px; }
.lrow i { width: 14px; height: 14px; margin-right: 5px; }
.sheets { height: 31px; background: #e6e6e6; border-top: 1px solid #c8c8c8; border-bottom: 1px solid #cdcdcd; display: flex; flex: none; color: #666; font-size: 12.500px; }
.sheets > div { border-right: 1px solid #cdcdcd; display: flex; align-items: center; justify-content: center; gap: 5px; flex: none; }
.sheets > .sheet { padding-right: 2px; }
.sheets svg { fill: none; stroke: #666; stroke-width: 1.100; width: 12px; height: 14px; }
.sheets .ds { width: 131px; justify-content: flex-start; padding-left: 9px; gap: 5px; }
.sheets .ds svg { width: 10px; height: 12px; }
.sheets > .on { background: #fcfcfc; font-weight: 700; color: #444; padding-bottom: 2px; }
.sheets .new { width: 32px; }
.sheets .new svg { width: 16px; height: 16px; }
.sheets .h { stroke-width: 2.200; }
.status { height: 20px; flex: none; background: #ebebeb; display: flex; align-items: center; padding-left: 3px; font-size: 11.500px; color: #222; }
.s1 { width: 64px; }
.s2 { width: 120px; }
.user { width: 127px; height: 20px; margin-left: auto; border-left: 1px solid #c8c8c8; display: flex; align-items: center; padding: 0 7px 0 5px; }
.user svg { width: 12px; height: 14px; fill: none; stroke: #666; margin-right: 9px; }
.drop.blk { border-width: 5px 4px 0; border-top-color: #000; margin-left: auto; }
.cell { width: 27px; height: 20px; border-left: 1px solid #c8c8c8; }
.c3 { width: 47px; border-right: 1px solid #c8c8c8; }
.nav { width: 71px; height: 20px; border-right: 1px solid #c8c8c8; }
.modes { width: 68px; height: 20px; }
.taskbar { height: 40px; flex: none; display: flex; align-items: center; color: #fff; background: linear-gradient(to right, #1d1a0c 0, #1c170e 390px, #1b1413 450px, #291d1a 580px, #1f1714 700px, #100f0e 770px, #17160c 880px, #201d0c 1040px, #2a2523 1160px, #222020 1210px, #2b2518 1290px, #211d0d 1366px); }
.start { width: 48px; height: 40px; }
.tsearch { width: 344px; height: 40px; background: #343434; display: flex; align-items: center; padding: 0 15px 0 9px; font-size: 14px; color: #aaa; flex: none; }
.cortana { width: 21px; height: 21px; border: 3px solid #fff; border-radius: 50%; margin-right: 10px; }
.tsearch svg { width: 12px; height: 18px; fill: none; stroke: #b5b5b5; margin-left: auto; }
.tv { width: 50px; height: 40px; }
.apps { width: 490px; height: 40px; }
.hin { font: 700 8px "Noto Sans", sans-serif; fill: #fff; }
.xl { font: 700 11px "Noto Sans", sans-serif; fill: #fff; }
.tt { font: 700 17px "Liberation Serif", serif; fill: #1726c4; }
.tray { width: 62px; height: 40px; margin-left: 213px; }
.eng { width: 34px; font-size: 12px; padding-left: 6px; }
.clock { width: 70px; display: flex; flex-direction: column; align-items: center; font-size: 11.500px; line-height: 18px; margin-left: 2px; }
.note { width: 18px; height: 18px; fill: none; stroke: #fff; stroke-width: 1.200; margin-left: 12px; }
.peek { width: 1px; height: 40px; background: #777; margin-left: 18px; }
</style>
